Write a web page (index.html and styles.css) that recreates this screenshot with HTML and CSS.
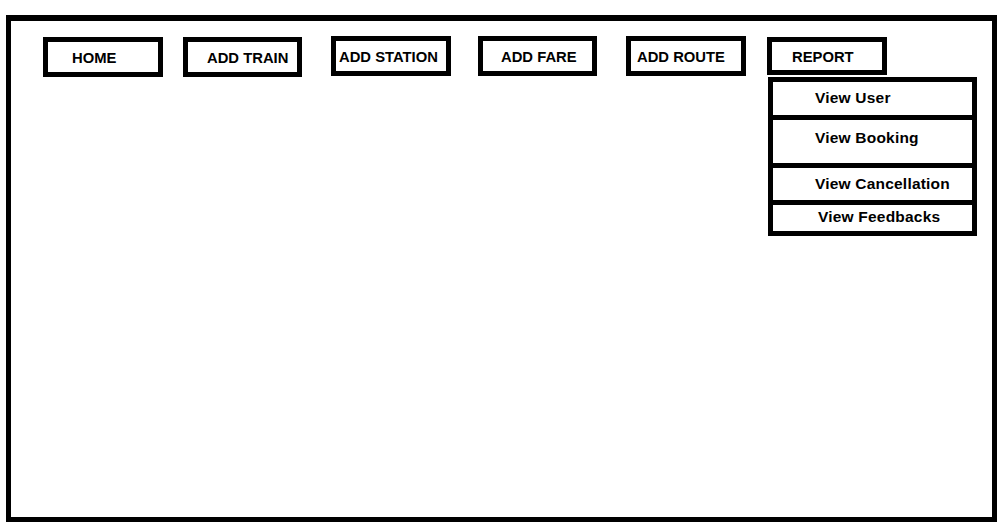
FILE: index.html
```html
<!DOCTYPE html>
<html lang="en">
<head>
<meta charset="utf-8">
<title>Admin Menu</title>
<link rel="stylesheet" href="styles.css">
</head>
<body>
<div class="frame">
  <nav class="nav">
    <a class="btn btn-home">HOME</a>
    <a class="btn btn-train">ADD TRAIN</a>
    <a class="btn btn-station up">ADD STATION</a>
    <a class="btn btn-fare up">ADD FARE</a>
    <a class="btn btn-route up">ADD ROUTE</a>
    <div class="menu">
      <a class="btn btn-report">REPORT</a>
      <ul class="dropdown">
        <li class="item item-user">View User</li>
        <li class="item item-booking">View Booking</li>
        <li class="item item-cancel">View Cancellation</li>
        <li class="item item-feedback">View Feedbacks</li>
      </ul>
    </div>
  </nav>
</div>
</body>
</html>
```

FILE: styles.css
```css
html, body {
  margin: 0;
  padding: 0;
  background: #ffffff;
}

body {
  font-family: "Liberation Sans", Arial, sans-serif;
  color: #000000;
}

.frame {
  margin: 15px 0 0 6px;
  width: 991px;
  height: 507px;
  border: 5px solid #000000;
  border-top-width: 6px;
  box-sizing: border-box;
}

.nav {
  display: flex;
  align-items: flex-start;
  padding: 16px 0 0 32px;
}

.btn {
  display: flex;
  align-items: center;
  box-sizing: border-box;
  width: 120px;
  height: 40px;
  padding-top: 2px;
  border: 5px solid #000000;
  font-weight: bold;
  font-size: 14.8px;
  line-height: 1;
  color: #000000;
  text-decoration: none;
  white-space: nowrap;
}

.up {
  margin-top: -1px;
}

.btn-home {
  padding-left: 24px;
}

.btn-train {
  margin-left: 20px;
  width: 119px;
  padding-left: 19px;
}

.btn-station {
  margin-left: 29px;
  padding-left: 3px;
}

.btn-fare {
  margin-left: 27px;
  width: 119px;
  padding-left: 18px;
}

.btn-route {
  margin-left: 29px;
  padding-left: 6px;
}

.menu {
  position: relative;
  margin-left: 21px;
}

.btn-report {
  height: 38px;
  padding-left: 20px;
}

.dropdown {
  position: absolute;
  top: 40px;
  left: 1px;
  width: 209px;
  margin: 0;
  padding: 0;
  list-style: none;
  border: 5px solid #000000;
  border-top: 0;
  box-sizing: border-box;
  background: #ffffff;
}

.item {
  border-top: 5px solid #000000;
  padding-left: 42px;
  font-weight: bold;
  font-size: 15.5px;
  line-height: 1;
  letter-spacing: 0.2px;
  white-space: nowrap;
}

.item-user {
  height: 25px;
  padding-top: 8px;
}

.item-booking {
  height: 33px;
  padding-top: 10px;
}

.item-cancel {
  height: 24px;
  padding-top: 8px;
}

.item-feedback {
  height: 22px;
  padding-top: 4px;
  padding-left: 45px;
}
```
